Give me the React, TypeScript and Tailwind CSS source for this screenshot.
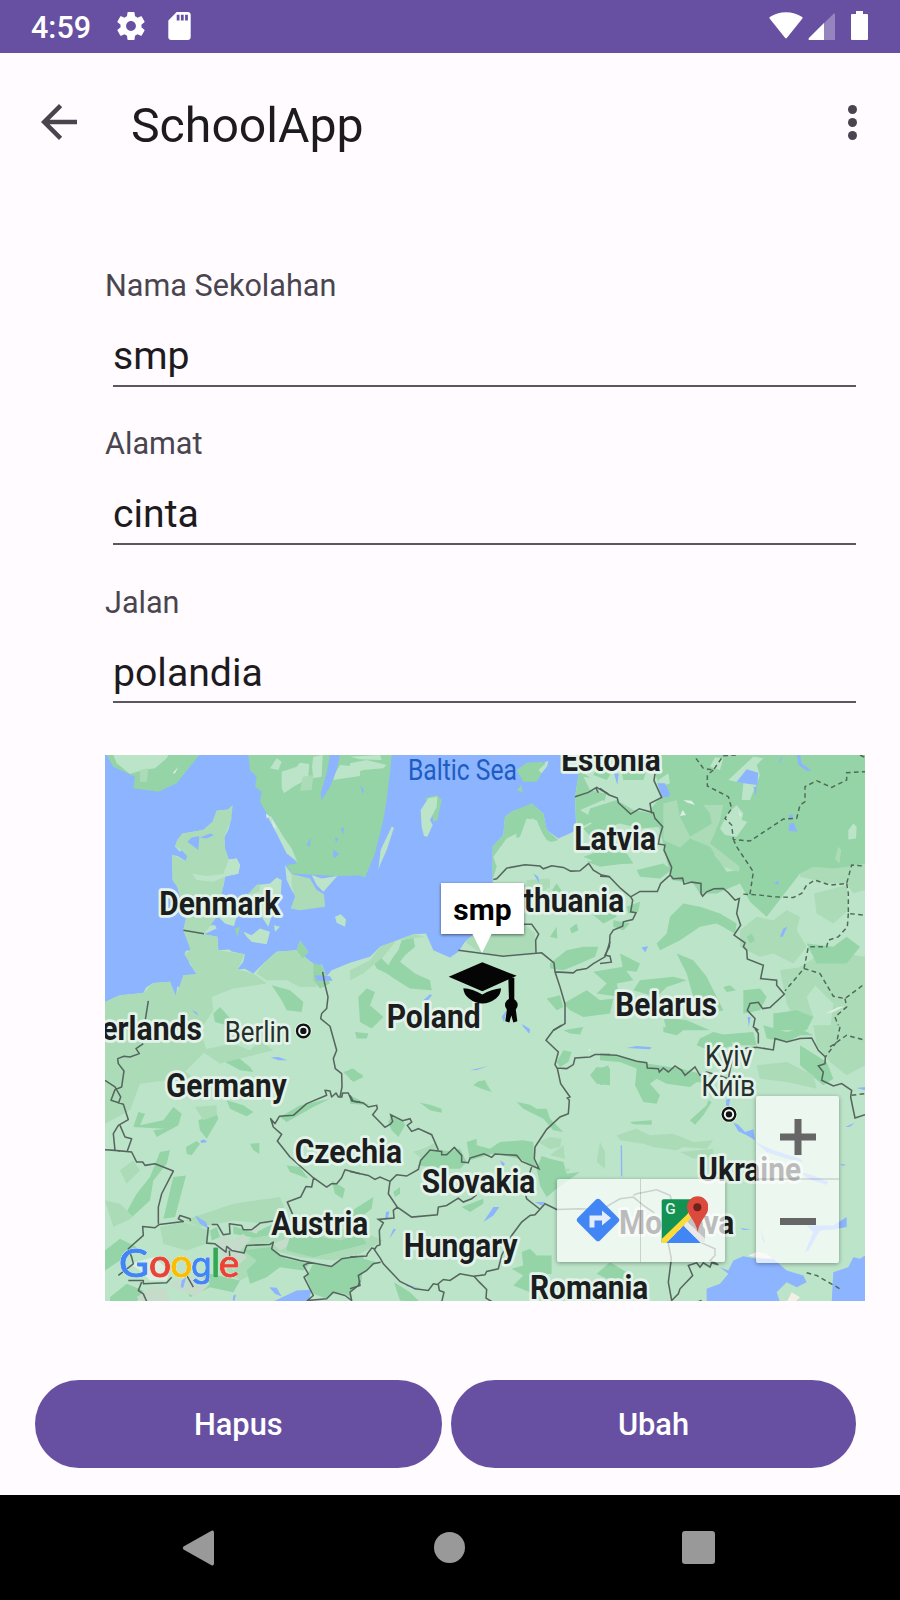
import React from "react";

type Tone = "light" | "mid" | "dark" | "water" | "snow";

const tones: Record<Tone, string> = {
  light: "#bce4c8",
  mid: "#abdcb7",
  dark: "#94d4a7",
  water: "#8cb4ff",
  snow: "#dceee2",
};

function Land({ tone, shapes }: { tone: Tone; shapes: string[] }) {
  return <path fill={tones[tone]} d={shapes.map((s) => `M${s}Z`).join("")} />;
}

function Border({ lines }: { lines: string[] }) {
  return (
    <path
      d={lines.map((l) => `M${l}`).join("")}
      fill="none"
      stroke="#56665f"
      strokeWidth={4.6}
      strokeLinejoin="round"
    />
  );
}

function Place({ x, y, w, children, city }: { x: number; y: number; w: number; children: string; city?: boolean }) {
  return (
    <text
      x={x}
      y={y}
      textLength={w}
      lengthAdjust="spacingAndGlyphs"
      fontSize={city ? 89 : 97}
      fontWeight={city ? 400 : 700}
      fill={city ? "#26302b" : "#1b1d1e"}
      stroke="#e4f3e9"
      strokeWidth={17}
      strokeLinejoin="round"
      paintOrder="stroke"
    >
      {children}
    </text>
  );
}

function Capital({ x, y }: { x: number; y: number }) {
  return (
    <g>
      <circle cx={x} cy={y} r={25} fill="#e4f3e9" />
      <circle cx={x} cy={y} r={19} fill="#f2f7f4" stroke="#101312" strokeWidth={7} />
      <circle cx={x} cy={y} r={9.5} fill="#101312" />
    </g>
  );
}

function MapCanvas() {
  return (
    <svg viewBox="15 15 2280 1638" className="block h-full w-full" preserveAspectRatio="none" fontFamily="Roboto, sans-serif">
      <rect x="15" y="15" width="2280" height="1638" fill="#8cb4ff" />

      {/* mainland */}
      <Land
        tone="light"
        shapes={[
          "15 755 60 735 130 728 138 712 160 698 210 695 218 722 228 737 232 708 245 718 250 675 290 672 268 640 266 620 253 612 258 602 272 600 268 580 250 540 258 505 232 410 218 390 216 315 232 318 258 333 262 318 245 300 240 305 225 290 232 270 248 250 310 240 338 215 350 182 385 178 398 165 390 180 394 205 385 240 373 262 375 295 386 328 410 325 420 345 415 370 400 375 375 375 370 410 345 418 360 440 350 500 320 510 316 525 345 525 350 535 312 552 352 560 355 600 388 598 395 604 435 612 430 635 412 658 435 656 460 670 490 640 530 605 590 600 600 572 625 605 610 622 640 640 650 650 665 642 680 678 695 660 750 638 810 620 840 590 940 552 978 550 1000 600 1050 622 1075 605 1095 575 1180 500 1178 388 1178 290 1210 255 1215 200 1240 182 1270 175 1295 160 1330 190 1340 240 1375 265 1420 245 1428 220 1425 140 1438 60 1400 45 1385 15 2295 15 2295 1653 15 1653",
        ]}
      />
      <Land
        tone="mid"
        shapes={[
          "250 540 258 505 232 410 218 390 216 315 258 333 262 318 245 300 225 290 232 270 248 250 310 240 338 215 350 182 385 178 398 165 394 205 373 262 375 295 386 328 370 410 350 500 312 552 352 560 355 600 435 612 412 658 460 670 500 700 400 715 335 740 340 780 300 840 320 900 260 960 200 990 120 1000 90 1080 15 1120 15 755 60 735 130 728 160 698 210 695 228 737 250 675 290 672 253 612 272 600",
          "490 640 530 605 590 600 640 640 650 710 600 710 560 690 500 690 470 670",
        ]}
      />
      <Land
        tone="dark"
        shapes={[
          "445 15 450 60 470 80 465 110 485 125 480 155 500 190 520 205 560 290 590 340 560 345 575 370 650 375 712 378 780 376 795 382 825 310 850 210 860 150 872 50 875 15",
          "20 15 40 50 105 80 100 115 175 125 230 100 298 15",
          "1640 15 2295 15 2295 400 2200 360 2100 370 2000 500 1950 455 1920 400 1850 430 1800 430 1780 400 1715 390 1700 330 1680 240 1650 180 1690 130",
          "1210 255 1215 200 1240 182 1295 160 1330 190 1340 240 1375 270 1340 280 1310 210 1280 205 1260 260 1230 270 1190 350 1178 388 1178 290",
          "1425 140 1438 60 1480 90 1520 130 1500 200 1430 240",
        ]}
      />

      {/* northern and western part */}
      <Land
        tone="light"
        shapes={[
          "40 15 50 40 90 72 130 60 165 55 200 25 205 15",
          "545 65 590 50 600 38 628 42 625 80 600 100 580 110 552 130 545 115",
          "640 20 668 15 665 80 640 85 636 50",
          "510 55 530 25 545 35 535 60",
          "720 45 780 50 780 78 700 90 705 70",
          "500 195 515 200 550 260 575 295 592 335 560 310 530 250",
          "555 345 575 372 592 380 580 430 560 390",
          "635 375 665 385 712 378 670 425 650 405",
          "275 370 320 378 370 372 386 328 410 325 420 345 415 370 375 380 340 395 290 390",
          "440 440 470 405 510 400 530 382 545 390 542 440 520 480 505 530 485 500 450 480",
          "430 545 455 555 480 535 510 545 500 582 455 575 440 560",
          "705 500 722 492 738 508 735 530 710 518",
          "350 495 410 498 402 528 375 520",
          "522 525 540 530 525 545",
        ]}
      />
      <Land
        tone="mid"
        shapes={[
          "575 372 630 385 650 420 672 432 675 470 600 480 572 475 585 440 575 410",
          "608 80 640 75 635 120 600 122",
          "120 60 145 55 140 95 120 95",
          "470 405 480 402 478 425 440 435",
        ]}
      />
      <Land
        tone="dark"
        shapes={[
          "590 600 600 572 625 605 608 625",
          "640 640 665 645 690 700 660 715 640 690",
          "515 705 570 720 610 755 605 785 560 780 545 750",
          "340 790 360 770 400 815 380 825 345 815",
          "405 535 420 530 412 560",
          "775 740 800 715 825 725 810 765 850 800 815 835 780 815",
          "820 635 840 620 865 645 880 620 895 600 905 570 940 562 945 590 915 615 900 635 945 670 990 690 995 720 930 715 890 690 860 670 830 655",
          "375 915 400 910 450 950 460 965 420 960 375 935",
          "380 1050 430 1065 460 1085 440 1098 390 1075",
          "295 1110 350 1090 355 1105 320 1165 300 1140",
          "258 1190 290 1172 300 1180 275 1215 260 1210",
          "190 1405 220 1280 258 1275 225 1400",
          "60 1420 110 1330 150 1280 180 1205 210 1200 200 1240 160 1290 150 1350 90 1405",
          "115 1085 135 1090 120 1125 190 1110 220 1070 245 1090 235 1125 170 1160 160 1140 195 1135 100 1130",
          "15 1500 60 1465 110 1490 60 1530 15 1560",
          "450 1180 478 1178 478 1210 460 1200",
          "540 1100 600 1065 690 1045 640 1070 560 1115",
          "560 1245 600 1250 625 1285 570 1265",
          "695 1290 735 1315 728 1345 705 1330",
          "730 965 760 955 790 980 760 995",
        ]}
      />
      <Land
        tone="mid"
        shapes={[
          "15 920 60 925 80 960 70 1030 15 1040",
          "180 960 240 950 300 1000 240 1010",
          "300 900 400 880 450 900 480 870 520 900 440 920 360 940",
          "285 1070 350 1065 350 1095 310 1110",
          "250 1410 400 1360 540 1340 560 1390 500 1420 400 1410 300 1430",
          "60 1260 100 1230 120 1260 80 1300",
          "15 1350 60 1360 100 1400 40 1430",
          "180 1430 250 1415 330 1440 320 1480 260 1500 190 1480",
          "400 1480 520 1440 640 1430 780 1440 850 1470 780 1510 700 1530 600 1520 520 1500 480 1560 420 1590 380 1560",
        ]}
      />

      {/* Alps */}
      <Land
        tone="dark"
        shapes={[
          "400 1428 470 1445 520 1420 560 1425 530 1450 460 1462 400 1450",
          "430 1500 510 1490 560 1525 630 1540 610 1560 540 1550 500 1580 450 1600 440 1560 470 1530",
          "560 1460 640 1455 720 1470 780 1450 800 1480 720 1500 640 1520 560 1500",
          "640 1540 695 1550 730 1525 790 1520 785 1590 750 1625 755 1645 735 1630 700 1625 680 1645 640 1630 618 1580",
          "250 1600 330 1570 420 1590 400 1625 330 1610 270 1640",
          "30 1640 80 1600 130 1620 110 1653 30 1653",
          "330 1440 350 1430 360 1460 335 1470",
        ]}
      />
      <path
        fill="#c6dccb"
        d="M345 1480L370 1455 400 1470 430 1450 450 1470 420 1500 440 1520 400 1560 370 1520ZM200 1600L300 1570 330 1600 290 1640 240 1620ZM110 1640L160 1605 200 1615 210 1653 130 1653ZM520 1480L570 1460 560 1490 540 1500ZM440 1440L480 1430 470 1450ZM640 1450L680 1435 690 1450 650 1462Z"
      />
      <Land
        tone="water"
        shapes={[
          "262 275 275 262 298 258 295 300 275 285",
          "300 262 330 250 342 255 320 265",
          "690 15 720 15 710 60 690 110 665 150 662 130 680 70",
          "620 285 632 262 630 290",
          "722 235 732 232 730 255",
          "700 298 718 312 700 325",
          "705 262 715 265 708 278",
          "512 922 535 920 562 930 535 930",
          "285 1395 318 1415 325 1435 300 1420",
          "300 1172 312 1167 322 1175 305 1178",
          "520 1653 590 1620 635 1618 625 1653",
          "508 1610 530 1612 545 1638 525 1630",
          "645 675 690 678 698 692 650 692",
          "275 780 290 785 295 797",
          "245 1590 258 1580 250 1612 242 1610",
          "400 1635 408 1632 404 1650 398 1650",
        ]}
      />
      <Land
        tone="snow"
        shapes={[
          "498 190 508 198 500 205",
          "516 208 530 235 520 230",
          "218 70 235 50 225 70",
          "90 1540 160 1520 210 1560 200 1590 150 1590 120 1560",
        ]}
      />

      {/* Baltic coast, Poland and Carpathians */}
      <g transform="translate(750 0)">
        <Land
          tone="mid"
          shapes={[
            "345 575 380 550 520 520 555 550 555 608 460 615 390 608",
            "90 590 190 552 225 560 140 570 100 620 40 670 0 690 0 660 60 630",
            "530 390 600 385 600 410 570 430 530 410",
          ]}
        />
        <Land
          tone="dark"
          shapes={[
            "500 60 530 38 575 35 590 45 560 95 520 95",
            "500 120 515 105 518 128",
            "225 145 260 135 275 150 262 210 250 215 245 180",
            "600 560 620 530 622 565",
            "660 535 680 520 685 540 665 550",
            "600 640 650 600 700 590 745 590 735 620 690 640 640 660 600 655",
            "640 760 710 720 750 750 790 745 780 790 700 800 660 780",
            "590 745 630 735 640 770 620 780",
            "560 420 600 430 620 400 640 430 600 460",
            "700 235 760 200 800 215 790 250 730 270",
            "700 320 760 300 830 310 850 340 760 345",
            "725 490 790 470 800 500 760 520",
          ]}
        />
        <Land
          tone="light"
          shapes={[
            "212 180 235 145 262 140 260 170 240 210 248 225 232 260 222 258 215 230",
            "85 360 92 300 125 230 132 232 110 300 90 345",
            "565 60 585 42 592 48 575 70",
            "582 38 595 32 592 48",
            "430 320 470 265 500 250 495 290 440 350",
            "530 210 550 205 590 270 640 290 680 330 640 350 560 320 520 345 530 300",
            "0 40 50 30 110 45 100 55 40 60 0 75",
            "0 20 90 15 95 30 30 28",
            "700 80 760 90 800 110 760 130 720 120",
            "690 180 760 150 790 200 740 210",
          ]}
        />
        <Land
          tone="water"
          shapes={["550 370 565 380 568 400", "30 105 42 120 38 132", "220 750 240 732 246 735 225 760", "455 800 470 780 462 815", "515 820 540 838 538 850"]}
        />
        <path
          d="M430 388L440 386 470 354 525 344 570 348 580 356 605 347 640 352 662 363 690 362 716 340 730 360 755 375 780 380M522 522L545 522 566 552 557 570 558 608M325 600L460 618 575 608 612 638 615 665 630 710 645 762 645 820 610 840M615 665L670 668 680 660 710 655 730 640 765 620 780 575M675 140L715 127 740 112 780 135M738 115L745 128"
          fill="none"
          stroke="#56665f"
          strokeWidth="4.6"
        />
      </g>

      <g transform="translate(750 825)">
        <Land
          tone="dark"
          shapes={[
            "0 130 40 150 0 165",
            "370 180 385 168 405 165 425 200 395 190",
            "210 232 240 238 275 250 275 262 240 255",
            "500 230 540 238 560 250 590 250 600 280 640 320 610 315 580 280 520 250",
            "115 290 125 270 160 288 165 300 145 335 125 315",
            "205 420 220 395 245 372 300 378 330 370 350 410 330 430 290 430",
            "350 350 380 340 380 360 420 370 450 350 520 345 550 350 552 395 560 430 510 400 430 385 360 405",
            "335 545 400 520 400 535 360 560",
            "560 430 575 392 600 400 640 410 650 445 690 440 620 490 590 515 570 480",
            "0 560 70 515 65 550 0 600 -30 590",
            "130 500 150 485 150 505 135 515",
            "485 730 520 720 515 680 540 670 560 690 605 690 605 745 540 750 540 800 490 780 520 750",
            "132 770 180 800 210 830 150 825",
            "620 110 640 75 665 80 655 110 630 125",
            "720 150 740 125 780 130 780 180 740 175",
            "640 15 700 5 690 28 660 25",
            "0 705 40 700 80 710 30 750 0 770",
            "0 210 40 230 60 240 0 235",
            "15 20 55 25 50 40 20 40",
          ]}
        />
        <Land tone="mid" shapes={["565 350 600 335 635 340 630 365 600 372", "600 390 640 360 645 400", "190 380 260 350 265 372 240 375 215 400", "640 430 660 430 655 440"]} />
        <Land
          tone="water"
          shapes={["400 590 430 545 448 545 430 570", "105 580 108 560 118 558 114 578", "118 640 130 610 138 612", "555 530 585 530 575 540", "515 0 538 10 538 25", "450 405 465 415 458 425", "360 135 415 122 380 134", "165 775 210 788 170 782"]}
        />
        <Land tone="snow" shapes={["188 378 250 355 220 368", "715 75 722 68 718 80", "405 170 425 202 412 180"]} />
        <path
          d="M0 210L10 228 40 233 55 245 80 240 82 250 68 268 105 306 122 296 128 288 122 268 158 286 180 280 185 290 172 300 185 318 205 310 245 328 265 374M0 438L55 450 75 462 90 455 120 468 115 505 142 545 185 575 262 568 265 545 290 540 325 518 340 530 365 520 380 508M120 468L140 448 170 452 205 432 212 405 240 374 275 378 275 388 290 388 313 366 335 390 335 410 355 412 360 398 402 385 425 396 435 386 500 390 515 408 567 430 553 400 555 365 590 312 630 275 655 265 658 225 652 218 660 215 632 175 622 130 615 118 625 80 588 45 610 15 635 0M622 128L650 130 670 118 675 98 720 95 735 88 780 88M142 545L130 555 132 578 85 582 100 592 88 615 90 658 80 662 75 670 65 668 52 685 50 692 0 695M70 668L92 700 100 715 150 768 195 790 235 795 250 775 262 777 280 762 300 765 330 745 370 752 405 748 410 738 445 730 455 690 485 630 515 590 540 570 555 568 585 535 620 552 690 550 780 555M92 710L70 715 50 735 25 750 30 780 0 790M265 777L268 795 282 800 275 830M372 752L388 770 410 792 408 818 425 828M545 425L530 470 522 490 530 520 568 550"
          fill="none"
          stroke="#56665f"
          strokeWidth="4.6"
        />
      </g>

      {/* Baltic states, Belarus and Russia */}
      <g transform="translate(1500 0)">
        <Land
          tone="light"
          shapes={[
            "385 90 460 20 490 25 470 45 480 75 450 150 425 150 430 100",
            "330 50 345 22 370 25 360 60",
            "360 235 380 195 410 165 430 190 425 210 442 215 410 260 375 255",
            "745 240 760 220 770 230 768 265 745 268",
            "175 90 205 70 210 100 180 110",
            "25 130 100 115 130 140 90 150 30 150",
            "340 310 370 330 400 350 420 360 380 365 360 335",
          ]}
        />
        <Land
          tone="mid"
          shapes={[
            "190 160 230 150 240 200 270 260 335 220 330 190 310 165 370 165 360 210 340 260 330 280 420 350 415 365 370 350 330 290 270 265 240 292 190 270",
            "600 370 640 350 700 355 740 350 795 340 795 420 760 430 740 400 690 400 600 380",
            "642 430 740 405 745 480 700 520 650 490",
            "420 540 470 500 520 510 560 480 600 500 590 540 620 590 580 640 520 610 480 620 420 590",
            "600 650 680 600 795 620 795 840 690 840 700 760 640 700",
            "705 325 715 290 724 300 718 340",
            "540 660 610 650 650 700 620 740 640 800 600 840 560 760",
          ]}
        />
        <Land
          tone="dark"
          shapes={[
            "-30 175 50 150 100 180 160 190 185 230 120 235 60 220 0 235 -40 210",
            "110 360 190 340 215 360 180 385 120 380",
            "-40 335 80 310 70 340 0 350",
            "210 500 250 460 300 470 360 490 410 520 405 550 350 520 300 530 240 570 180 600 170 580 200 550",
            "80 470 120 455 115 485 85 490",
            "40 510 90 520 70 540 40 530",
            "60 610 120 640 110 665 70 660",
            "230 610 280 630 320 680 340 720 370 780 330 790 280 740 260 670",
            "-20 665 70 650 100 690 50 700 60 740 -10 730 20 700",
            "120 690 220 680 260 690 200 710 170 740 100 720",
            "370 710 390 705 408 720 380 725",
            "430 720 480 715 500 740 480 780 430 790",
            "440 560 455 550 465 570 450 580",
            "620 580 700 590 740 560 780 590 740 640 650 640",
            "520 790 590 780 640 800 620 840 520 840",
            "190 800 260 810 330 840 200 840",
            "0 40 40 60 20 90 -20 75",
            "60 40 140 60 130 90 70 90",
          ]}
        />
        <Land
          tone="water"
          shapes={[
            "172 100 195 100 210 130 205 142 185 140",
            "410 95 440 58 475 68 472 105 430 100",
            "460 110 470 112 468 138",
            "568 220 582 218 592 245 566 242",
            "565 195 578 193 578 208 568 206",
            "42 70 56 72 52 105",
            "124 592 144 588 136 606",
            "540 560 550 535 562 530 548 560",
            "590 15 600 15 605 40 635 62 620 62 596 45",
            "532 45 545 20 548 24",
            "522 400 535 392 536 404",
            "443 800 452 800 446 830",
          ]}
        />
        <Land tone="snow" shapes={["240 198 248 180 258 195", "250 150 275 152 285 165 262 158", "415 180 424 195 420 200", "675 790 715 770 735 768 700 785"]} />
        <path
          d="M0 115L28 135 52 144 55 158 92 192 118 176 160 188 165 205 188 230 180 255 175 282 195 285 192 300 215 352 210 375 220 386 248 384 252 402 275 396 303 400 303 430 308 438 320 425 342 416 370 415 385 428 405 450 418 445 410 490 422 525 402 555 435 578 430 590 440 600 442 626 490 645 482 685 530 690 530 705 553 732 510 772 488 775 475 756 450 760 442 780 465 805 460 830 475 840M155 190L150 160 185 142 162 92 165 70M0 378L28 380 62 415 92 440 120 424 172 424 182 400 210 375M92 440L98 450 92 485 108 488 98 508 70 515 68 528 40 540 30 555 28 590 15 615 30 618 34 636 0 640"
          fill="none"
          stroke="#56665f"
          strokeWidth="4.6"
        />
        <path
          d="M288 25L310 55 340 60 370 17 410 15M340 60L322 75 322 108 385 140 395 175 375 205 395 225 400 268 450 273 550 207 590 205 600 165 615 155 615 110 650 92 695 112 740 90 740 68 795 65M400 268L410 290 460 365 450 432M430 432L480 435 520 440 580 442 605 430 620 405 645 390 690 405 740 400 755 345 795 348M740 400L745 430 745 490 795 495M745 490L742 530 715 560 685 570 680 590 625 590 612 655 555 722M612 655L660 670 700 738 735 745 795 700M735 745L740 770 705 800 720 840M780 15L795 22"
          fill="none"
          stroke="#4f6a59"
          strokeWidth="4.4"
          strokeDasharray="14 10"
        />
      </g>

      {/* Ukraine and Black Sea */}
      <g transform="translate(1500 825)">
        <Land
          tone="dark"
          shapes={[
            "0 85 40 90 140 115 240 130 300 145 330 160 330 175 290 170 270 185 200 175 170 160 150 175 180 210 170 235 130 230 105 180 110 130 60 110 0 105",
            "290 60 300 40 340 20 380 30 400 60 340 80",
            "0 130 25 120 30 150 20 175 0 180",
            "90 290 155 285 155 298 100 297",
            "270 285 320 240 325 225 335 230 310 270 285 298",
            "-10 745 30 710 80 740 60 770 20 760",
            "490 0 560 20 600 10 640 30 600 30 560 50 500 40",
            "600 60 680 110 700 160 670 180 600 120",
            "340 30 460 20 470 60 420 60",
            "190 5 250 15 230 30 190 20",
          ]}
        />
        <Land
          tone="mid"
          shapes={[
            "50 330 110 310 150 330 220 325 280 350 340 345 320 370 250 365 230 375 160 365 130 355 60 345",
            "640 0 795 0 795 120 740 150 690 110 650 60",
            "470 120 560 110 640 150 650 190 560 170 480 160",
            "240 380 340 370 340 395 280 400",
            "0 350 15 380 15 430 -10 410",
          ]}
        />
        <Land
          tone="water"
          shapes={[
            "320 830 320 790 360 775 385 745 360 725 385 735 400 705 430 692 470 700 520 700 560 735 610 750 620 770 590 785 560 770 530 800 540 830",
            "695 830 700 740 745 725 760 695 780 700 795 690 795 830",
            "80 68 110 62 155 66 150 72",
            "378 225 392 215 386 245 378 240",
            "400 292 415 298 435 320 460 312 465 345 440 330 415 318",
            "465 350 520 375 600 400 610 410 560 400 500 380",
            "600 440 640 450 685 470 680 478 630 462",
            "620 600 700 600 740 575 740 605 700 612 660 615 625 675 615 680 640 620",
            "420 608 455 612 430 614",
            "480 610 495 650 490 650",
            "62 360 66 360 67 455 63 450",
            "720 415 738 418 728 422",
            "735 305 765 292 750 304",
            "770 188 795 185 795 195",
          ]}
        />
        <path fill="#f3efe6" d="M445 690L470 680 500 685 520 700 470 695ZM560 830L575 800 600 815 585 830Z" />
        <path
          d="M0 88L50 90 110 108 140 112 142 128 175 130 178 140 190 128 205 140 225 122 245 135 255 150 285 125 300 150 320 140 355 150 385 160 395 110 400 85 440 68 470 66 520 74 525 40 560 50 600 40 635 38 655 75 676 95 675 115 655 122 670 140 665 165 700 182 725 175 755 195 752 215 758 245 765 278 795 268M465 10L475 25 475 55M0 555L60 520 100 515 130 540 160 560M100 510L110 505 170 493 210 510 215 525M160 560L190 610 205 655 214 700 205 770 215 825 235 805 240 790 278 750 265 720 290 712 300 725 310 712 330 725 335 712 355 718 330 705 345 690 345 670 300 650M290 830L305 825"
          fill="none"
          stroke="#56665f"
          strokeWidth="4.6"
        />
        <path d="M720 5L710 50 676 95M690 65L740 30 795 45M620 742L650 750 720 790M755 210L795 205" fill="none" stroke="#4f6a59" strokeWidth="4.4" strokeDasharray="14 10" />
      </g>

      {/* western borders */}
      <Border
        lines={[
          "250 540 312 551",
          "145 752 136 808",
          "130 880 108 895 118 910 90 920 72 918 53 925 55 940 72 962 65 1010 45 1018 33 1050 70 1062 85 1108 55 1125 40 1150 45 1200 60 1203",
          "15 990 45 1010 62 1040 55 1060",
          "60 1125 75 1160 95 1165 82 1202",
          "15 1198 45 1200 95 1205 110 1235 128 1235 135 1245 165 1240 220 1262 185 1330 175 1370 175 1420",
          "55 1575 100 1540 95 1520 85 1495 130 1455 128 1428 165 1432 178 1422 250 1413 235 1405 240 1395 270 1405 272 1412",
          "668 665 674 700 684 740 680 775 665 790 662 805 690 828 710 900 700 925 706 955 725 970 726 1010 720 1040",
          "725 1040 715 1040 708 1028 695 1040 690 1022 675 1020 680 1035 620 1060 580 1095 538 1098 525 1120 512 1105 520 1130 545 1152 532 1172 570 1220 640 1282 680 1310 695 1300 710 1300 725 1282 735 1258 780 1270",
          "725 1042 728 1028 745 1028 755 1052 780 1055",
          "640 1285 635 1310 618 1308 602 1340 562 1355 578 1392",
          "335 1422 352 1422 370 1453 390 1450 388 1420 425 1425 430 1438 455 1438 480 1418 520 1412",
          "325 1430 320 1478 345 1480 378 1505 380 1488 395 1500 432 1508 440 1485 510 1482 520 1475 515 1495 540 1515 600 1530 695 1548 725 1525 770 1518",
          "630 1535 610 1545 625 1570 612 1580 640 1635 622 1650 680 1645 700 1625 735 1635 755 1650 750 1625 775 1605 780 1590",
          "85 1590 130 1590 130 1600 200 1597 215 1580",
          "125 1595 115 1620 130 1630 140 1653",
          "388 1500 390 1530",
          "260 1575 280 1610",
        ]}
      />

      <text x="924" y="89" textLength="327" lengthAdjust="spacingAndGlyphs" fontSize="89" fill="#1d5cc2">
        Baltic Sea
      </text>
      <Place x={1384} y={62} w={298}>Estonia</Place>
      <Place x={1423} y={299} w={245}>Latvia</Place>
      <Place x={1199} y={487} w={374}>Lithuania</Place>
      <Place x={178} y={494} w={363}>Denmark</Place>
      <Place x={1546} y={796} w={305}>Belarus</Place>
      <Place x={860} y={832} w={282}>Poland</Place>
      <Place x={-190} y={868} w={496}>Netherlands</Place>
      <Place x={374} y={874} w={196} city>Berlin</Place>
      <Place x={198} y={1039} w={362}>Germany</Place>
      <Place x={584} y={1237} w={322}>Czechia</Place>
      <Place x={965} y={1328} w={341}>Slovakia</Place>
      <Place x={514} y={1453} w={291}>Austria</Place>
      <Place x={911} y={1519} w={342}>Hungary</Place>
      <Place x={1290} y={1647} w={355}>Romania</Place>
      <Place x={1795} y={1293} w={308}>Ukraine</Place>
      <Place x={1557} y={1451} w={346}>Moldova</Place>
      <Place x={1815} y={946} w={142} city>Kyiv</Place>
      <Place x={1804} y={1037} w={162} city>Київ</Place>
      <Capital x={610} y={842} />
      <Capital x={1887} y={1092} />

      {/* school marker */}
      <g transform="translate(750 0)" fill="#050505">
        <path d="M296 680L397 636 500 677 397 723Z" />
        <path d="M340 714Q368 715 397 733Q425 716 453 714Q453 732 438 745Q418 760 397 760Q376 760 356 744Q341 732 340 714Z" />
        <path d="M475 683H493V752H477Z" />
        <circle cx="484" cy="764" r="19" />
        <path d="M471 775H497L502 813 490 817 484 796 478 817 466 813Z" />
      </g>

      <g fontFamily="Lato, sans-serif" fontSize="117" strokeWidth="3" className="[filter:drop-shadow(0_0_2px_#e8f4ec)_drop-shadow(0_0_2px_#e8f4ec)_drop-shadow(0_0_1px_#e8f4ec)]">
        <text x="57" y="1579" fill="#4285f4" stroke="#4285f4" textLength="90" lengthAdjust="spacingAndGlyphs">G</text>
        <text x="147" y="1579" fill="#ea4335" stroke="#ea4335">o</text>
        <text x="211" y="1579" fill="#fbbc05" stroke="#fbbc05">o</text>
        <text x="273" y="1579" fill="#4285f4" stroke="#4285f4" fontFamily="Inter, sans-serif" fontSize="101">g</text>
        <text x="333" y="1579" fill="#34a853" stroke="#34a853">l</text>
        <text x="356" y="1579" fill="#ea4335" stroke="#ea4335">e</text>
      </g>
    </svg>
  );
}

function InfoWindow() {
  return (
    <div className="absolute left-[336px] top-[128px] flex h-[51px] w-[83px] items-center justify-center bg-white text-[30px] font-bold leading-none text-black shadow-[0_1px_3px_rgba(0,0,0,0.55)]">
      <span className="pt-[3px]">smp</span>
      <svg viewBox="0 0 20 20" className="absolute left-[31px] top-[50px] size-5" fill="#fff">
        <path d="M0 0H20L10 20Z" />
      </svg>
    </div>
  );
}

function MapToolbar() {
  return (
    <div className="absolute left-[452px] top-[424px] flex h-[83px] w-[168px] rounded-[2px] bg-white/70 shadow-[0_1px_4px_rgba(0,0,0,0.35)]">
      <div className="flex w-[84px] items-center justify-center border-r border-black/15">
        <svg viewBox="0 0 44 44" className="mr-px size-11">
          <path d="M20 1.6 1.6 20a3 3 0 0 0 0 4L20 42.4a3 3 0 0 0 4 0L42.4 24a3 3 0 0 0 0-4L24 1.6a3 3 0 0 0-4 0Z" fill="#4285f4" />
          <path d="M13.5 29.500V17.500H26V12.500L35 20 26 27.500V22.500H18.500V29.500Z" fill="#e4edf9" />
        </svg>
      </div>
      <div className="flex flex-1 items-center justify-center">
        <svg viewBox="0 0 141 141" className="mb-[2px] ml-[3px] size-[47px]">
          <path d="M8 10H95L75 70 2 140V16Q2 10 8 10Z" fill="#149253" />
          <path d="M15 141L68 89 120 141Z" fill="#4285f4" />
          <path d="M68 89L78 76 132 128V135L125 141H120Z" fill="#e8e8e8" />
          <path d="M78 76L105 60 132 100V128Z" fill="#c2c2c2" />
          <path d="M2 129L82 52 90 65 15 141H2Z" fill="#fddb36" />
          <path d="M78 33a32 32 0 0 1 64 0C142 60 118 67 110 108 102 67 78 60 78 33Z" fill="#dc4a3e" />
          <circle cx="109" cy="34" r="12" fill="#6d231c" />
          <text x="13" y="54" fontSize="46" fontFamily="Roboto, sans-serif" fontWeight="500" fill="#e9f7ef">G</text>
        </svg>
      </div>
    </div>
  );
}

function ZoomControls() {
  return (
    <div className="absolute left-[651px] top-[341px] flex h-[167px] w-[83px] flex-col rounded-[2px] bg-white/70 shadow-[0_1px_4px_rgba(0,0,0,0.35)]">
      <div className="flex flex-1 items-center justify-center border-b-2 border-black/10">
        <svg viewBox="0 0 38 38" className="size-[38px]" fill="#666">
          <path d="M15.500 1H22.500V15.500H37V22.500H22.500V37H15.500V22.500H1V15.500H15.500Z" />
        </svg>
      </div>
      <div className="flex flex-1 items-center justify-center">
        <div className="mb-px h-[7px] w-9 bg-[#666]" />
      </div>
    </div>
  );
}

function Field({ label, value }: { label: string; value: string }) {
  return (
    <div className="h-[158.300px]">
      <div className="text-[30.600px] leading-10 text-[#49454f]">{label}</div>
      <div className="ml-2 mr-[9px] mt-6 h-[56.500px] border-b-2 border-[#5b5760] pt-px text-[39.200px] leading-[50px] text-[#1d1b20]">{value}</div>
    </div>
  );
}

function StatusBar() {
  return (
    <header className="flex h-[52.500px] items-center bg-[#6750a2] pl-[31px] pr-[32px] text-white">
      <span className="pt-[3px] text-[30.500px] font-medium leading-[52px]">4:59</span>
      <svg viewBox="2 2 20 20" className="ml-[26px] size-[28px]" fill="currentColor">
        <path d="M19.430 12.980c.040-.320.070-.640.070-.980s-.030-.660-.070-.980l2.110-1.650c.190-.150.240-.420.120-.640l-2-3.460c-.120-.220-.390-.300-.610-.220l-2.490 1c-.520-.400-1.080-.730-1.690-.980l-.380-2.650C14.460 2.180 14.250 2 14 2h-4c-.250 0-.460.180-.490.420l-.380 2.650c-.610.250-1.170.590-1.690.980l-2.490-1c-.230-.090-.490 0-.610.220l-2 3.460c-.130.220-.070.490.120.640l2.110 1.650c-.040.320-.070.650-.070.980s.030.660.070.980l-2.110 1.650c-.190.150-.240.420-.120.640l2 3.460c.120.220.390.300.610.220l2.490-1c.520.400 1.080.730 1.690.980l.380 2.650c.030.240.240.420.490.420h4c.250 0 .460-.180.490-.420l.380-2.650c.610-.250 1.170-.590 1.690-.980l2.490 1c.230.090.490 0 .610-.220l2-3.460c.120-.220.070-.490-.120-.640l-2.110-1.650zM12 15.500c-1.930 0-3.500-1.570-3.500-3.500s1.570-3.500 3.500-3.500 3.500 1.570 3.500 3.500-1.570 3.500-3.500 3.500z" />
      </svg>
      <svg viewBox="4 2 16 20" className="ml-[23px] h-[28px] w-[23px]" fill="currentColor">
        <path d="M18 2h-8L4.020 8 4 20c0 1.100.900 2 2 2h12c1.100 0 2-.900 2-2V4c0-1.100-.900-2-2-2zm-6 6h-2V4h2v4zm3 0h-2V4h2v4zm3 0h-2V4h2v4z" />
      </svg>
      <svg viewBox="0 0 34 27" className="mb-[2px] ml-auto h-[27px] w-[34px]" fill="currentColor">
        <path d="M.600 6.500Q0 5.800.800 5.100 8 .300 17 .300T33.200 5.100Q34 5.800 33.400 6.500L18 25.700Q17 27 16 25.700Z" />
      </svg>
      <svg viewBox="0 0 27 27" className="ml-[5px] size-[27px]" fill="currentColor">
        <path d="M1 27Q0 26 1 25L25.500.800Q27 0 27 1.500V27Z" opacity=".3" />
        <path d="M1 27Q0 26 1 25L16 10V27Z" />
      </svg>
      <svg viewBox="0 0 17 29" className="mb-px ml-[16px] h-[29px] w-[17px]" fill="currentColor">
        <path d="M5 0H12V3H16Q17 3 17 4V28Q17 29 16 29H1Q0 29 0 28V4Q0 3 1 3H5Z" />
      </svg>
    </header>
  );
}

export default function App() {
  return (
    <div className="flex h-[1600px] w-[900px] flex-col bg-[#fffbff] font-[Roboto,sans-serif]">
      <StatusBar />

      <div className="flex h-[139px] items-center pl-[41px] pr-[43px]">
        <svg viewBox="4 4 16 16" className="size-9 shrink-0" fill="#49454f">
          <path d="M20 11H7.830l5.590-5.590L12 4l-8 8 8 8 1.410-1.410L7.830 13H20v-2z" />
        </svg>
        <h1 className="ml-[54px] pt-[7px] text-[48.200px] leading-[60px] text-[#1d1b20]">SchoolApp</h1>
        <div className="ml-auto flex flex-col gap-1">
          <span className="size-[9px] rounded-full bg-[#49454f]" />
          <span className="size-[9px] rounded-full bg-[#49454f]" />
          <span className="size-[9px] rounded-full bg-[#49454f]" />
        </div>
      </div>

      <main className="flex flex-1 flex-col pl-[105px] pr-[35px] pt-[74.500px]">
        <Field label="Nama Sekolahan" value="smp" />
        <Field label="Alamat" value="cinta" />
        <Field label="Jalan" value="polandia" />

        <section className="relative mt-[14.100px] h-[546.500px] w-[760px] overflow-hidden">
          <MapCanvas />
          <InfoWindow />
          <MapToolbar />
          <ZoomControls />
        </section>
      </main>

      <div className="mb-[27px] flex h-[88px] gap-[9.500px] pl-[35px] pr-[44px] text-[30.800px] font-medium text-white">
        <button className="w-[406.500px] rounded-full bg-[#6750a2] pt-[3px]">Hapus</button>
        <button className="flex-1 rounded-full bg-[#6750a2] pt-[3px]">Ubah</button>
      </div>

      <nav className="flex h-[105px] items-center bg-black pl-[182px] pr-[185px]">
        <svg viewBox="0 0 32 36" className="h-9 w-8" fill="#999">
          <path d="M29.500.800Q32 0 32 2.500V33.500Q32 36 29.500 35.200L1.500 19.500Q0 18 1.500 16.500Z" />
        </svg>
        <span className="ml-[220px] size-[31px] rounded-full bg-[#999]" />
        <span className="ml-auto size-[33px] rounded-[3px] bg-[#999]" />
      </nav>
    </div>
  );
}
